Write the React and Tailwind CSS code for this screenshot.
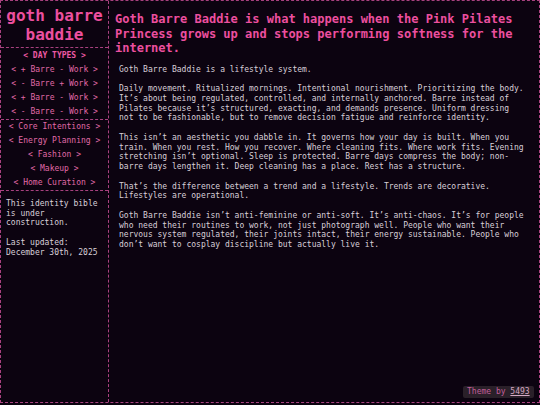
export default function App() {
  const mono = { fontFamily: '"DejaVu Sans Mono", "Liberation Mono", monospace' };
  const dayTypes = [
    "< + Barre - Work >",
    "< - Barre + Work >",
    "< + Barre - Work >",
    "< - Barre - Work >",
  ];
  const links = [
    "< Core Intentions >",
    "< Energy Planning >",
    "< Fashion >",
    "< Makeup >",
    "< Home Curation >",
  ];
  const paras = [
    "Goth Barre Baddie is a lifestyle system.",
    "Daily movement. Ritualized mornings. Intentional nourishment. Prioritizing the body. It\u2019s about being regulated, controlled, and internally anchored. Barre instead of Pilates because it\u2019s structured, exacting, and demands presence. Uniform dressing not to be fashionable, but to remove decision fatigue and reinforce identity.",
    "This isn\u2019t an aesthetic you dabble in. It governs how your day is built. When you train. When you rest. How you recover. Where cleaning fits. Where work fits. Evening stretching isn\u2019t optional. Sleep is protected. Barre days compress the body; non-barre days lengthen it. Deep cleaning has a place. Rest has a structure.",
    "That\u2019s the difference between a trend and a lifestyle. Trends are decorative. Lifestyles are operational.",
    "Goth Barre Baddie isn\u2019t anti-feminine or anti-soft. It\u2019s anti-chaos. It\u2019s for people who need their routines to work, not just photograph well. People who want their nervous system regulated, their joints intact, their energy sustainable. People who don\u2019t want to cosplay discipline but actually live it.",
  ];
  return (
    <div className="w-[540px] h-[405px] bg-[#0c0310] relative overflow-hidden" style={mono}>
      <div className="w-[540px] h-[403px] border border-dashed border-[#a8417f] flex">
        <aside className="w-[108px] shrink-0 border-r border-dashed border-[#a8417f] flex flex-col">
          <div className="pt-[5px] pb-[3px] border-b border-dashed border-[#a8417f] text-center text-[16px] leading-[19px] font-bold text-[#ec4f9f]">
            goth barre<br />baddie
          </div>
          <div className="border-b border-dashed border-[#a8417f] text-center text-[8px] leading-[14px] pt-px">
            <div className="font-bold text-[#ec5aa5]">&lt; DAY TYPES &gt;</div>
            {dayTypes.map((t, i) => (
              <div key={i} className="text-[#e06aa8]">{t}</div>
            ))}
          </div>
          <div className="border-b border-dashed border-[#a8417f] text-center text-[8px] leading-[14px]">
            {links.map((t, i) => (
              <div key={i} className="text-[#e06aa8]">{t}</div>
            ))}
          </div>
          <div className="px-[5px] pt-[8px] text-[8px] leading-[9.7px] text-[#d8cfd8]">
            <p className="mb-[9.7px]">This identity bible is under construction.</p>
            <p>Last updated: December 30th, 2025</p>
          </div>
        </aside>
        <main className="flex-1">
          <h1 className="pl-[6px] pt-[11px] w-[440px] text-[12px] leading-[14.5px] font-bold text-[#ec4f9f]">
            Goth Barre Baddie is what happens when the Pink Pilates Princess grows up and stops performing softness for the internet.
          </h1>
          <div className="pl-[10px] pt-[9px] w-[416px] text-[8px] leading-[9.75px] text-[#d8cfd8]">
            {paras.map((p, i) => (
              <p key={i} className="w-[406px] mb-[9.75px]">{p}</p>
            ))}
          </div>
        </main>
      </div>
      <div className="absolute left-[463px] top-[386px] h-[12px] px-[4px] rounded-[2px] bg-[#2a2029] text-[8px] leading-[12px] text-[#c25e9a]">
        Theme by <span className="underline text-[#d6a9c4]">5493</span>
      </div>
    </div>
  );
}
